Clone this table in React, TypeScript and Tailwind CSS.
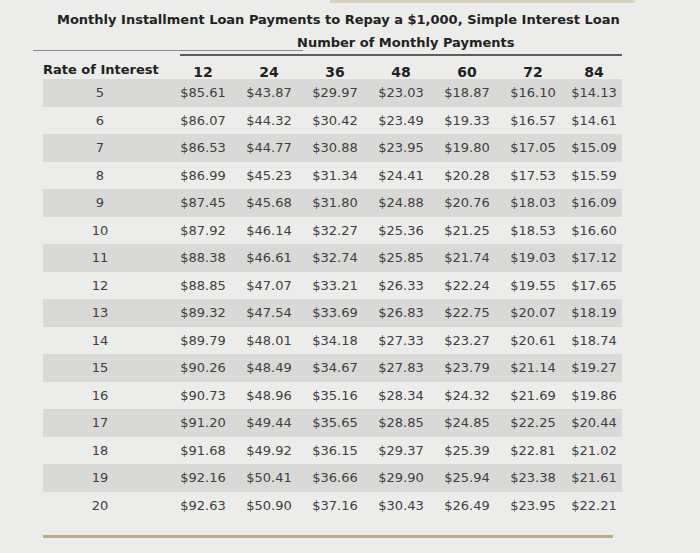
const cols = ['12', '24', '36', '48', '60', '72', '84']

const rows: [number, string[]][] = [
  [5, ['$85.61', '$43.87', '$29.97', '$23.03', '$18.87', '$16.10', '$14.13']],
  [6, ['$86.07', '$44.32', '$30.42', '$23.49', '$19.33', '$16.57', '$14.61']],
  [7, ['$86.53', '$44.77', '$30.88', '$23.95', '$19.80', '$17.05', '$15.09']],
  [8, ['$86.99', '$45.23', '$31.34', '$24.41', '$20.28', '$17.53', '$15.59']],
  [9, ['$87.45', '$45.68', '$31.80', '$24.88', '$20.76', '$18.03', '$16.09']],
  [10, ['$87.92', '$46.14', '$32.27', '$25.36', '$21.25', '$18.53', '$16.60']],
  [11, ['$88.38', '$46.61', '$32.74', '$25.85', '$21.74', '$19.03', '$17.12']],
  [12, ['$88.85', '$47.07', '$33.21', '$26.33', '$22.24', '$19.55', '$17.65']],
  [13, ['$89.32', '$47.54', '$33.69', '$26.83', '$22.75', '$20.07', '$18.19']],
  [14, ['$89.79', '$48.01', '$34.18', '$27.33', '$23.27', '$20.61', '$18.74']],
  [15, ['$90.26', '$48.49', '$34.67', '$27.83', '$23.79', '$21.14', '$19.27']],
  [16, ['$90.73', '$48.96', '$35.16', '$28.34', '$24.32', '$21.69', '$19.86']],
  [17, ['$91.20', '$49.44', '$35.65', '$28.85', '$24.85', '$22.25', '$20.44']],
  [18, ['$91.68', '$49.92', '$36.15', '$29.37', '$25.39', '$22.81', '$21.02']],
  [19, ['$92.16', '$50.41', '$36.66', '$29.90', '$25.94', '$23.38', '$21.61']],
  [20, ['$92.63', '$50.90', '$37.16', '$30.43', '$26.49', '$23.95', '$22.21']],
]

const grid = 'grid grid-cols-[127px_66px_66px_66px_66px_66px_66px_56px]'

export default function App() {
  return (
    <div className="h-[553px] w-[700px] overflow-hidden bg-[#ececea] font-['DejaVu_Sans','Verdana',sans-serif] text-[#404040]">
      <div className="ml-[330px] h-[3px] w-[305px] bg-[#d9d2bd]" />
      <h1 className="mt-[10px] pl-[57px] text-[13px] font-bold leading-[14px] text-[#222]">
        Monthly Installment Loan Payments to Repay a $1,000, Simple Interest Loan
      </h1>
      <div className="mt-[9px] pl-[297px] text-[13px] font-bold leading-[14px] text-[#222]">
        Number of Monthly Payments
      </div>
      <div className="ml-[33px] h-px w-[270px] bg-[#8a8a8a]" />
      <div className="mt-[3px] ml-[180px] h-[2px] w-[442px] bg-[#5e5e5e]" />

      <div className="ml-[43px] w-[579px]">
        <div className={`${grid} h-[23px] items-center font-bold text-[#222]`}>
          <div className="text-[13px]">Rate of Interest</div>
          {cols.map((c) => (
            <div key={c} className="pt-[6px] text-center text-[14px]">
              {c}
            </div>
          ))}
        </div>

        {rows.map(([rate, vals], i) => (
          <div
            key={rate}
            className={`${grid} h-[27.5px] items-center text-[13px] ${i % 2 === 0 ? 'bg-[#d9d9d7]' : ''}`}
          >
            <div className="pr-[13px] text-center">{rate}</div>
            {vals.map((v, j) => (
              <div key={j} className="text-center">
                {v}
              </div>
            ))}
          </div>
        ))}

        <div className="mt-[16px] h-[3px] w-[570px] bg-[#b8b08a]" />
      </div>
    </div>
  )
}
